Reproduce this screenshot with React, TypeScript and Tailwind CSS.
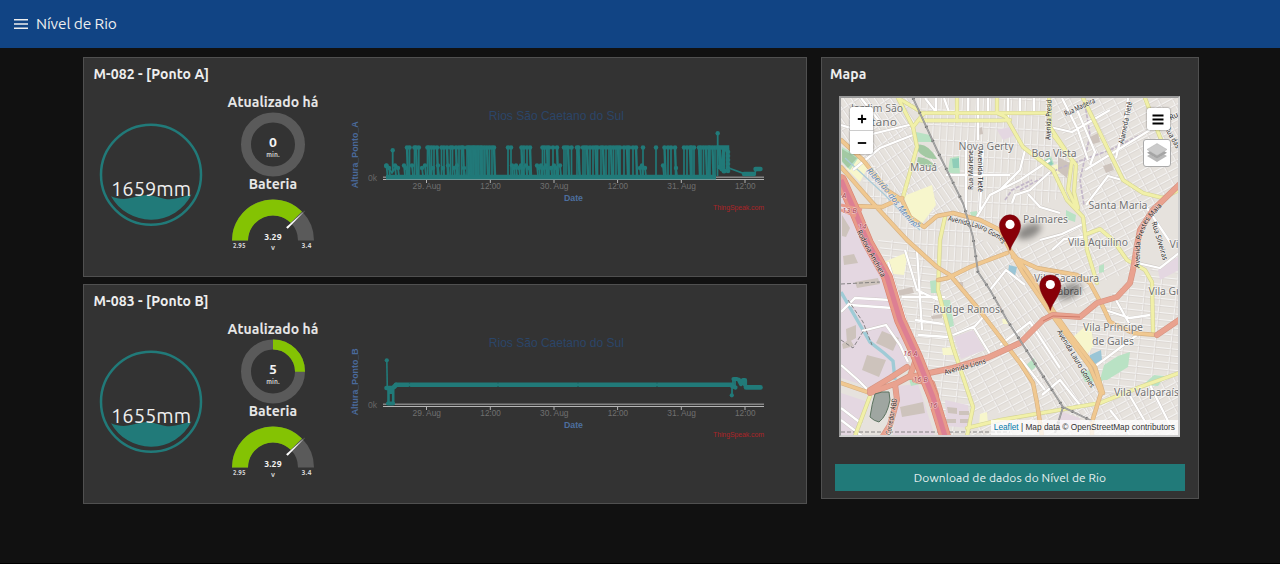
import React from "react";

const TEAL = "#217a79";
const UI = "Ubuntu, 'Noto Sans', 'Open Sans', sans-serif";
const ARIAL = "'Liberation Sans', Arial, sans-serif";

/* ---------- gauges ---------- */

function WaterGauge({ value, cls }: { value: string; cls: string }) {
  return (
    <svg viewBox="93 92 117 184" className={cls}>
      <circle cx="151" cy="174.7" r="50" fill="none" stroke={TEAL} strokeWidth="2.5" />
      <path
        d="M111 196.2 C117 198.5 122 199.6 128 198.6 C135 197.3 140 195.2 147 194.9 C155 195 162 199.3 170 199.3 C178 199 185 196 191.5 194.6 A45.5 45.5 0 0 1 111 196.2Z"
        fill={TEAL}
      />
      <text x="151" y="195.7" textAnchor="middle" fontFamily={UI} fontSize="20.5" fill="#eeeeee" textLength="80" lengthAdjust="spacingAndGlyphs">
        {value}
      </text>
    </svg>
  );
}

function Donut({ value }: { value: number }) {
  const c = 2 * Math.PI * 27;
  return (
    <svg viewBox="222 112 102 65" className="block h-[65px] w-[102px]">
      <circle cx="273" cy="144.5" r="27" fill="none" stroke="#5a5a5a" strokeWidth="10" />
      {value > 0 && (
        <circle cx="273" cy="144.5" r="27" fill="none" stroke="#84c303" strokeWidth="10" strokeDasharray={`${c / 4} ${c}`} transform="rotate(-90 273 144.5)" />
      )}
      <text x="273" y="147" textAnchor="middle" fontFamily={UI} fontWeight="700" fontSize="13" fill="#f4f4f4" textLength="8" lengthAdjust="spacingAndGlyphs">{value}</text>
      <text x="273" y="157.3" textAnchor="middle" fontFamily={UI} fontSize="6.5" fill="#c8c8c8" textLength="13.5" lengthAdjust="spacingAndGlyphs">min.</text>
    </svg>
  );
}

function HalfGauge() {
  return (
    <svg viewBox="222 194 102 66" className="block h-[66px] w-[102px]">
      <path d="M240 240.5 A33 33 0 0 1 306 240.5" fill="none" stroke="#5a5a5a" strokeWidth="16" />
      <path d="M240 240.5 A33 33 0 0 1 296.3 217.2" fill="none" stroke="#84c303" strokeWidth="16" />
      <path d="M286.1 227.2 L287.7 228.8 L305.2 210.6Z" fill="#ffffff" />
      <text x="273" y="239.7" textAnchor="middle" fontFamily={UI} fontWeight="700" fontSize="8.4" fill="#f4f4f4" textLength="17.5" lengthAdjust="spacingAndGlyphs">3.29</text>
      <text x="273" y="250" textAnchor="middle" fontFamily={UI} fontSize="7.4" fill="#d0d0d0">v</text>
      <text x="239.3" y="248" textAnchor="middle" fontFamily={UI} fontSize="6.3" fill="#d8d8d8" textLength="12.5" lengthAdjust="spacingAndGlyphs">2.95</text>
      <text x="306.5" y="248" textAnchor="middle" fontFamily={UI} fontSize="6.3" fill="#d8d8d8" textLength="10" lengthAdjust="spacingAndGlyphs">3.4</text>
    </svg>
  );
}

/* ---------- charts ---------- */

const TOP = 147.5;
const TALL = [
  407, 409.5, 414.5, 416, 418.8, 427.5, 429, 431.5, 434, 437, 441.5, 444, 447, 450.5, 452.5, 456, 459, 461.5, 463, 467, 468.5, 470, 472, 473.5, 475, 477, 478.5,
  480.5, 482, 484.5, 487, 489.5, 492, 494, 508, 511, 521.5, 524, 527, 530, 542.5, 544.5, 547, 549, 553, 557, 564, 566, 568, 571.5, 577, 578.5, 583, 585, 587,
  590, 593, 595.5, 597.5, 601, 603, 606, 609, 611, 613.5, 616, 618, 620, 624, 627, 629, 633, 636, 643, 656, 664.5, 668, 671, 675, 684, 687, 690, 691.5, 694,
  699, 701, 703.5, 706, 708.5, 710, 712.5, 715, 717.5,
];
const MID = [
  386.5, 389, 395, 398, 404, 406, 412, 422, 425, 433, 438, 443, 448, 454, 457, 464, 512, 514, 516, 519, 521, 523, 526, 529, 537, 539, 541, 544, 546, 551, 554,
  556, 560, 640, 642, 645, 663, 676,
];
const LABELS: [number, string][] = [[426.5, "29. Aug"], [490.3, "12:00"], [554, "30. Aug"], [617.6, "12:00"], [681.3, "31. Aug"], [745, "12:00"]];

function SeriesA() {
  return (
    <g stroke={TEAL} fill={TEAL}>
      <path d="M386 177.1 H716" strokeWidth="4.6" />
      {TALL.map((x, i) => (
        <g key={x}>
          <path d={`M${x} ${TOP} L${x + (i % 3 === 0 ? 1 : 0)} 176`} strokeWidth={i % 3 === 0 ? 2.4 : 1.7} />
          <circle cx={x} cy={TOP} r="2.3" stroke="none" />
        </g>
      ))}
      <path d="M467 148 H485 V176 H470Z M577 150 L580 176 M692 148 V176 M709 148 V176" strokeWidth="1.5" fillOpacity="0.75" />
      {MID.map((x, i) => (
        <g key={x}>
          <path d={`M${x} ${i % 2 ? 168 : 165.5} L${x + 1} 176`} strokeWidth="1.8" />
          <circle cx={x} cy={i % 2 ? 168 : 165.5} r="2.2" stroke="none" />
        </g>
      ))}
      <path d="M392.7 150.3 V172 M387 166 L392 173 L397 165" strokeWidth="1.8" fill="none" />
      <circle cx="392.7" cy="150.3" r="2.2" stroke="none" />
      <circle cx="386.3" cy="166" r="2.4" stroke="none" />
      <path d="M717.7 133.3 V168" strokeWidth="1.8" />
      <circle cx="717.7" cy="133.3" r="2.2" stroke="none" />
      <path d="M718 147.5 H727 L727 150" strokeWidth="4.5" fill="none" strokeLinecap="round" />
      <path d="M719 148 L721 168 M723.5 148 V169 M727.5 148 V171" strokeWidth="3.4" fill="none" />
      <g stroke="none">
        {[152, 156, 160, 164, 168, 171].map((y) => <circle key={y} cx="728" cy={y} r="2.3" />)}
        {[168, 170, 172].map((y) => <circle key={y} cx={720 + (y - 168)} cy={y - 1} r="2.5" />)}
      </g>
      <path d="M718 168 L728 171 M730 168.5 L744 173.5 H755 M755 173 L756 169 H761" strokeWidth="1.8" fill="none" />
      <path d="M744 174 H754 M755.5 169 H760.5" strokeWidth="4.4" strokeLinecap="round" />
    </g>
  );
}

function SeriesB() {
  return (
    <g stroke={TEAL} fill={TEAL}>
      <path d="M386.8 133.3 L387.3 161" strokeWidth="1.6" />
      <circle cx="386.8" cy="133.3" r="2.1" stroke="none" />
      <path d="M386.5 161 H392 M394 160 L396 158" strokeWidth="4.6" strokeLinecap="round" />
      <path d="M388.5 161 V176 M393.2 160 V176 M391 161 V167" strokeWidth="2.6" />
      <path d="M388 176.5 H393" strokeWidth="4.2" strokeLinecap="round" />
      <path d="M396 157.7 H732" strokeWidth="4.6" strokeLinecap="round" />
      <path d="M732 157 V168 M733 157 V152 M735 152 V161" strokeWidth="1.8" />
      <circle cx="731.8" cy="168.3" r="2.1" stroke="none" />
      <path d="M733.5 152 H737 M739 153 L741 157 L743 153 L745 153 L745 158 M735.5 160.5 L732 159" strokeWidth="4.2" fill="none" strokeLinecap="round" strokeLinejoin="round" />
      <path d="M746 160.4 H760.5" strokeWidth="4.6" strokeLinecap="round" />
      <g fill="#185655" stroke="none">
        {[409.5, 498, 578, 657].map((x) => <path key={x} d={`M${x - 1} 155.5h2l-1 1.2zM${x - 1} 160h2l-1-1.2z`} />)}
      </g>
    </g>
  );
}

function Chart({ axis, children }: { axis: string; children: React.ReactNode }) {
  return (
    <svg viewBox="340 92 450 184" className="block h-[184px] w-[450px] shrink-0" fontFamily={ARIAL}>
      <text x="556.3" y="120" textAnchor="middle" fontSize="12.4" fill="#2b4568" textLength="135" lengthAdjust="spacingAndGlyphs">Rios São Caetano do Sul</text>
      <text transform="translate(358.3 154.8) rotate(-90)" textAnchor="middle" fontSize="8.8" fontWeight="700" fill="#4a6a9c" textLength="67" lengthAdjust="spacingAndGlyphs">{axis}</text>
      <text x="368" y="181" fontSize="8.6" fill="#666666">0k</text>
      <path d="M383 177.3 H764" stroke="#858585" strokeWidth="1.4" />
      <path d="M383 179.5 H764" stroke="#b5b5b5" strokeWidth="1.2" />
      {LABELS.map(([x, t]) => (
        <g key={x}>
          <path d={`M${x} 179.5 v3.5`} stroke="#b5b5b5" />
          <text x={x + 0.3} y="189.2" textAnchor="middle" fontSize="8.4" fill="#707070" textLength={t.length > 5 ? 28.5 : 20.5} lengthAdjust="spacingAndGlyphs">{t}</text>
        </g>
      ))}
      {children}
      <text x="573.5" y="201.3" textAnchor="middle" fontSize="8.8" fontWeight="700" fill="#4d6f9f" textLength="19">Date</text>
      <text x="764" y="210" textAnchor="end" fontSize="7" fill="#ab2428" textLength="51">ThingSpeak.com</text>
    </svg>
  );
}

function Station({ title, level, minutes, axis, children }: { title: string; level: string; minutes: number; axis: string; children: React.ReactNode }) {
  return (
    <section className="flex h-[220px] w-[724px] flex-col border border-[#505050] bg-[#333333]">
      <h2 className="h-[34px] pl-[9.5px] text-[14px] leading-[33px] font-semibold tracking-[0.08px] text-[#eeeeee]">{title}</h2>
      <div className="flex">
        <WaterGauge value={level} cls="ml-[9px] block h-[184px] w-[117px] shrink-0" />
        <div className="ml-3 flex w-[102px] shrink-0 flex-col text-center text-[14px] font-semibold tracking-[0.08px] whitespace-nowrap text-[#e6e6e6]">
          <div className="h-5 leading-[21px]">Atualizado há</div>
          <Donut value={minutes} />
          <div className="h-[17px] leading-[15px]">Bateria</div>
          <HalfGauge />
        </div>
        <div className="ml-4">
          <Chart axis={axis}>{children}</Chart>
        </div>
      </div>
    </section>
  );
}

/* ---------- map ---------- */

const INDUSTRIAL = [
  "M841 190 L862 222 L887 285 L909 362 L872 388 L841 378Z",
  "M841 393 L868 402 L858 436 L841 436Z",
  "M897 386 L918 384 L935 436 L893 436Z",
  "M997 130 L1014 126 L1018 134 L1003 140Z",
  "M954 337 L973 330 L985 350 L961 359Z",
  "M945 400 L968 405 L970 428 L947 426Z",
  "M1060 411 L1080 418 L1078 428 L1055 430Z",
  "M1158 270 L1179 256 L1179 270 L1160 280Z",
];
const GREEN = [
  "M842 147 L859 157 L850 170 L842 162Z",
  "M916 132 L930 135 L933 142 L916 142Z",
  "M950 158 L959 156 L960 176 L948 172Z",
  "M930 281 L937 280 L937 293 L931 293Z",
  "M942 300 L950 300 L954 326 L947 328Z",
  "M1044 160 L1051 156 L1054 164 L1048 168Z",
  "M1100 380 L1104 365 L1118 356 L1130 352 L1128 367 L1107 380Z",
  "M1080 371 L1096 370 L1103 381 L1085 382Z",
  "M1143 385 L1154 375 L1165 376 L1158 386Z",
  "M1025 366 L1034 358 L1037 366 L1031 371Z",
  "M1099 266 L1104 264 L1104 272 L1099 273Z",
  "M907 372 L913 377 L920 384 L911 386Z",
  "M1066 210 L1076 215 L1075 222 L1066 219Z",
  "M970 212 L977 211 L977 219 L972 220Z",
];
const PALE = [
  "M904 196 L932 185 L936 205 L921 225 L909 214Z",
  "M857 157 L869 165 L860 182 L846 168Z",
  "M884 262 L908 252 L904 275 L885 273Z",
  "M1049 167 L1057 164 L1061 173 L1053 176Z",
  "M942 348 L953 347 L954 355 L943 355Z",
  "M1072 338 L1090 322 L1094 345 L1086 356Z",
  "M980 414 L987 412 L988 425 L979 425Z",
  "M1002 319 L1007 319 L1008 324 L1003 324Z",
];
const BUILDINGS = [
  "M846 329 L856 325 L856 338 L847 343Z", "M842 344 L850 339 L854 346 L843 349Z", "M882 331 L899 338 L893 351 L876 343Z",
  "M867 355 L886 360 L879 377 L862 370Z", "M843 256 L854 254 L858 263 L844 265Z", "M855 282 L878 278 L880 284 L857 288Z",
  "M900 407 L923 402 L925 413 L902 417Z", "M1103 166 L1111 163 L1114 170 L1106 173Z", "M1088 138 L1098 133 L1100 142 L1090 145Z",
  "M977 129 L982 127 L983 134 L978 135Z", "M931 316 L942 314 L942 318 L932 319Z", "M842 215 L850 228 L846 237 L842 236Z",
  "M947 407 L957 408 L957 414 L948 413Z", "M1058 157 L1070 163 L1067 178 L1058 171Z", "M957 282 h6 v5 h-6z", "M896 291 L912 287 L914 293 L898 296Z",
  "M959 411 h10 v4 h-10z M946 419 h10 v4 h-10z M960 419 h9 v4 h-9z",
];
const WHITE_ROADS = [
  "M853 170 L880 148 L913 135", "M841 125 L872 134 L913 124", "M861 98 L880 122", "M944 98 L949 112", "M925 98 L936 112 M936 98 V113",
  "M968 98 V112 M978 98 V140 M988 98 V112 M1008 98 V120 M1020 98 V112 M1034 98 V112", "M966 140 V220", "M983 150 L980 210", "M946 175 H1010",
  "M975 220 L990 195 L1020 180 L1050 160", "M1000 190 L1020 170 L1025 150", "M1012 203 L1015 195 L1030 190 L1050 172", "M1028 194 L1040 207 L1060 213",
  "M1040 240 L1062 234 L1083 224 M1052 250 L1064 239 L1083 237", "M1050 127 L1072 132 L1110 110 M1062 98 L1078 130 L1088 160", "M1075 105 L1095 152 L1090 165",
  "M1085 170 L1150 130", "M1116 158 L1125 120 L1128 98", "M1086 205 L1108 176 L1122 180", "M1145 205 L1172 245", "M1133 262 L1160 268 L1179 253",
  "M841 312 L855 298 L892 300 V308 L850 305", "M862 331 L886 325 L900 345 L908 362", "M841 365 L858 380 L870 392", "M888 262 L917 357",
  "M905 250 L917 290 L938 300 M917 250 L922 330 M902 297 H945", "M953 335 L975 326 L985 315", "M973 326 L990 354", "M990 290 L1006 270 L1025 285",
  "M1000 345 L1030 322 L1060 368 M1020 358 L1045 390", "M1093 368 L1137 335", "M1042 395 L1060 380 L1080 405", "M841 408 L862 424 M841 420 L862 436",
  "M915 320 L943 324 M918 335 L948 337", "M1105 310 L1130 318 L1150 315 M1116 300 L1130 325", "M1110 410 L1130 435 M1130 396 L1150 430 M1150 385 L1170 425",
];
const YELLOW = [
  "M898 98 L913 127 L917 147 L903 197", "M920 113 H1050", "M921 120.5 H1000 L1010 120", "M957 98 V121", "M997 98 V113 L1006 117 L1023 147 L1053 170 L1067 200 L1083 217 L1087 250 L1097 283",
  "M898 98 L918 110", "M1049 98 L1050 127 L1072 160 L1068 190 L1077 209", "M1054 136 L1076 165 L1074 192 L1078 208", "M1083 98 L1100 133 L1123 180 L1143 193 L1163 198 L1179 190",
  "M945 217 L940 240 L938 290 L953 347 L973 407 L967 436", "M967 428 L1000 420 L1100 403 L1140 387 L1179 373", "M1113 240 L1127 260 L1145 270 L1152 282 L1153 333",
  "M1145 98 L1160 137 L1168 155", "M870 396 L855 436", "M1087 234 L1100 229 L1113 240", "M913 127 L924 113",
];
const ORANGE = [
  "M841 140 L863 160 L887 190 L902 200 L910 217 L924 227 L937 216 L953 213 L980 220 L1000 230 L1010 250 L1023 273 L1050 312 L1063 330 L1090 367 L1101 393 L1092 422 V436",
  "M841 167 L870 200 L907 240 L937 267 L950 275 L977 307 L1020 363 L1033 383 L1037 403 L1042 436",
  "M938 280 L948 278 L970 267 L1007 253", "M1013 257 L1037 268 L1077 275 L1090 283 L1103 307 L1110 322 L1133 333 L1157 335", "M841 383 L870 393", "M853 206 L882 207 L902 198",
  "M1010 250 L1026 270 L1054 312 L1068 332 L1095 367 L1103 393",
];
const RED = [
  "M910 377 L953 368 L987 358 L1020 343 L1043 320 L1053 315 L1080 317 L1097 303 L1117 297 L1130 283 L1133 270 L1137 245 L1140 230 L1153 210 L1179 185",
  "M1157 335 L1179 320", "M870 393 L897 383 L910 376 L915 362", "M895 384 L897 400 L890 425 L883 436", "M870 390 L890 378 L907 367", "M915 380 L932 383 L936 395",
];
const ANCHIETA = "M841 180 L853 207 L868 243 L887 277 L900 320 L917 357 L933 397 L945 436";
const RAIL = "M913 98 L937 150 L963 203 L973 237 L978 272 L990 290 L1007 320 L1063 407 L1092 421 M1063 407 L1055 433";

function Roads({ list, edge, fill, w }: { list: string[]; edge: string; fill: string; w: number }) {
  return (
    <g fill="none" strokeLinejoin="round" strokeLinecap="round">
      <path d={list.join(" ")} stroke={edge} strokeWidth={w + 1.2} />
      <path d={list.join(" ")} stroke={fill} strokeWidth={w} />
    </g>
  );
}

const PLACES: [number, number, number, string][] = [
  [851, 112, 52, "Jardim São"], [850, 126, 47, "Caetano"], [958.5, 150, 55, "Nova Gerty"], [910, 171, 27, "Mauá"], [1031.5, 156.5, 45, "Boa Vista"], [1088.5, 208.5, 59, "Santa Maria"],
  [1023, 223, 45, "Palmares"], [1068, 245.5, 60, "Vila Aquilino"], [933, 313, 67, "Rudge Ramos"], [1034, 281.5, 65, "Vila Sacadura"], [1051, 295, 31, "Cabral"],
  [1083, 331, 60, "Vila Príncipe"], [1092, 344.5, 42, "de Gales"], [1148.5, 294.5, 34, "Vila Gu"], [1114, 396, 65, "Vila Valparaís"], [1169.5, 248, 9, "Vi"],
];
const STREETS: [string, number, string][] = [
  ["M971.5 190 V147", 40, "Rua Marlene"], ["M979.5 150 V195", 42, "Avenida Tietê"], ["M948 219 L980 227 L1001 239 L1008 252", 62, "Avenida Lauro Gomes"],
  ["M858 231 L884 279", 52, "Rodovia Anchieta"], ["M944.5 373.5 L987 361.5", 43, "Avenida Lions"], ["M1058 331 L1077 362 L1093 389", 66, "Avenida Lauro Gomes"],
  ["M1138 268 L1139 240 L1146 222 L1160 206", 70, "Avenida Prestes Maia"], ["M1153 222 L1165 262", 40, "Rua Silveiras"], ["M1065 115 L1097 100", 33, "Rua Madeira"],
  ["M1122 144 L1131 101", 43, "Alameda Tietê"], ["M1049 140 L1050 99", 40, "Avenida Presid"], ["M889 435 L896 398", 37, "Corredor ABD"], ["M1166 128 L1178 149", 23, "Rua das"], ["M1170 119 L1178 115", 9, "Ru"],
];

function Pin({ x, y }: { x: number; y: number }) {
  return (
    <g transform={`translate(${x} ${y})`}>
      <ellipse cx="19" cy="-19" rx="13" ry="6.5" transform="rotate(-25 19 -19)" fill="#000" opacity="0.4" filter="url(#shade)" />
      <path d="M0 0 C-2-8 -10.6-16 -10.6-25 A10.6 10.6 0 0 1 10.6-25 C10.6-16 2-8 0 0Z" fill="#880008" stroke="#700008" strokeWidth="0.5" />
      <circle cx="0" cy="-26" r="4.6" fill="#fff" />
    </g>
  );
}

function MapDrawing() {
  return (
    <svg viewBox="841 98 337 337" className="block h-full w-full">
      <defs>
        <filter id="shade" x="-50%" y="-50%" width="200%" height="200%"><feGaussianBlur stdDeviation="3" /></filter>
        <pattern id="g1" width="13" height="7" patternUnits="userSpaceOnUse" patternTransform="rotate(-28)"><path d="M0 0H13M0 0V7" stroke="#fff" strokeWidth="1.8" /><path d="M0 1.1H13M1.1 0V7" stroke="#c5bfbb" strokeWidth=".45" /></pattern>
        <pattern id="g2" width="7" height="15" patternUnits="userSpaceOnUse" patternTransform="rotate(3)"><path d="M0 0H7M0 0V15" stroke="#fff" strokeWidth="1.8" /><path d="M1.1 0V15M0 1.1H7" stroke="#c5bfbb" strokeWidth=".45" /></pattern>
        <pattern id="g3" width="6.5" height="17" patternUnits="userSpaceOnUse" patternTransform="rotate(-34)"><path d="M0 0H6.5M0 0V17" stroke="#fff" strokeWidth="1.8" /><path d="M1.1 0V17M0 1.1H7" stroke="#c5bfbb" strokeWidth=".45" /></pattern>
        <pattern id="g4" width="16" height="7" patternUnits="userSpaceOnUse" patternTransform="rotate(6)"><path d="M0 0H16M0 0V7" stroke="#fff" strokeWidth="1.8" /><path d="M0 1.1H16M1.1 0V7" stroke="#c5bfbb" strokeWidth=".45" /></pattern>
      </defs>
      <rect x="841" y="98" width="338" height="338" fill="#e6e2dd" />
      <path d="M841 98 H913 L917 150 L903 197 L841 140Z" fill="url(#g3)" />
      <path d="M913 98 H1050 V127 L1072 160 L1066 195 L1020 215 L973 237 L937 150Z" fill="url(#g2)" />
      <path d="M937 150 L917 160 L903 197 L936 215 L973 220Z" fill="url(#g3)" />
      <path d="M1050 98 H1179 V185 L1140 230 L1137 270 L1097 283 L1083 217 L1072 160Z" fill="url(#g1)" />
      <path d="M973 237 L1010 250 L1050 312 L1020 343 L978 272Z M1007 320 L1043 322 L1100 393 L1092 421 L1063 407Z" fill="url(#g3)" />
      <path d="M870 160 L903 197 L936 215 L975 220 L975 275 L940 270 L907 240 L860 190Z" fill="url(#g2)" />
      <path d="M878 240 L907 240 L938 275 L953 347 L917 357 L887 277Z" fill="url(#g4)" />
      <path d="M917 357 L953 347 L973 407 L967 436 H945 L933 397Z" fill="url(#g4)" />
      <path d="M940 275 L978 272 L1007 320 L1063 407 L973 415 L953 347Z" fill="url(#g1)" />
      <path d="M1010 250 L1087 225 L1097 303 L1050 312Z" fill="url(#g1)" />
      <path d="M1097 303 L1133 280 L1179 255 V373 L1101 400 L1063 330Z" fill="url(#g4)" />
      <path d="M967 430 L1179 376 V436 H967Z" fill="url(#g1)" />
      <path d={INDUSTRIAL.join(" ")} fill="#e4d7e1" />
      <path d={PALE.join(" ")} fill="#f7f6cc" />
      <path d={GREEN.join(" ")} fill="#b9e2c4" />
      <path d="M917 145 Q927 142 937 159 Q925 160 917 150Z M918 157 Q928 157 936 167 Q922 168 917 162Z M842 149 L857 158 L848 168 L842 161Z" fill="#a3c9a3" />
      <path d="M952 159 L959 158 L959 168 L953 168Z M1044 161 L1050 158 L1053 164 L1048 167Z" fill="#8fcdb8" />
      <path d={BUILDINGS.join(" ")} fill="#cdc3bc" />
      <path d="M1009 265 L1017 267 L1015 276 L1008 273Z M1090 355 L1101 350 L1102 360 L1088 368Z" fill="#9ac5d6" />
      <path d="M841 292 L856 318 L870 342 L884 353 L893 361 L895 380" fill="none" stroke="#9fcbd6" strokeWidth="3.4" />
      <path d="M845 158 L885 195 L904 215 L920 230" fill="none" stroke="#abcbd8" strokeWidth="1.2" />
      <path d="M1084 98 L1090 135 L1080 180 L1084 205 M1020 190 L1060 168 L1110 150 L1150 130 M1005 200 L1012 190 L1032 180" fill="none" stroke="#c3b7c9" strokeWidth="1.7" strokeDasharray="4 1.5" />
      <path d={WHITE_ROADS.join(" ")} fill="none" stroke="#c9c4c0" strokeWidth="3" />
      <path d={WHITE_ROADS.join(" ")} fill="none" stroke="#ffffff" strokeWidth="2.3" />
      <path d="M841 284 L880 282 M841 340 L853 348 L864 330 M848 300 L863 322 L872 345 M841 432 H1010" fill="none" stroke="#6d6d6d" strokeWidth="0.8" strokeDasharray="4 2" />
      <Roads list={YELLOW} edge="#d4d394" fill="#f1f0a8" w={3} />
      <Roads list={ORANGE} edge="#d6b183" fill="#f0c890" w={3.2} />
      <Roads list={RED} edge="#d49482" fill="#e9a28f" w={4.8} />
      <Roads list={[ANCHIETA]} edge="#d9826f" fill="#e89a8a" w={10.5} />
      <path d={ANCHIETA} fill="none" stroke="#dd7f93" strokeWidth="5" />
      <path d="M841 205 L862 210 M841 210 L856 216" stroke="#e89a8a" strokeWidth="3" />
      <path d="M875 394 Q882 391 889 392 L890 400 Q887 416 879 422 Q874 421 870 417 Q872 403 875 394Z" fill="#9fa6a1" stroke="#5c7360" strokeWidth="1" />
      <path d="M1043 321 L1053 316 L1080 317" fill="none" stroke="#c86f5e" strokeWidth="0.8" />
      <path d={RAIL} fill="none" stroke="#8f8f8f" strokeWidth="1.8" />
      <path d={RAIL} fill="none" stroke="#707070" strokeWidth="3" strokeDasharray="1.5 14" />
      <path d={RAIL} fill="none" stroke="#b9b9b9" strokeWidth="0.6" />
      <g fontFamily="'Noto Sans', sans-serif" fontSize="7.4" fill="#2a2a2a" stroke="#fff" strokeWidth="1.2" strokeOpacity="0.5" paintOrder="stroke">
        {STREETS.map(([d, len, t], i) => (
          <g key={d}>
            <path id={`street-${i}`} d={d} fill="none" stroke="none" />
            <text dy="1.5"><textPath href={`#street-${i}`} textLength={len} lengthAdjust="spacingAndGlyphs">{t}</textPath></text>
          </g>
        ))}
        <path id="river" d="M866 171 L886 193 L902 214 L912 226 L928 229" fill="none" stroke="none" />
        <text fontSize="8.5" fontStyle="italic" fill="#6489b5"><textPath href="#river" textLength="80" lengthAdjust="spacingAndGlyphs">Ribeirão dos Meninos</textPath></text>
      </g>
      <g fontFamily="'Noto Sans', sans-serif" fontSize="7.5" fontStyle="italic" fill="#a8434e" stroke="#fff" strokeWidth="1" strokeOpacity="0.6" paintOrder="stroke">
        <text x="903" y="356">16 A</text><text x="913" y="382">16 B</text><text x="929" y="408">16</text><text x="858" y="229">14</text><text x="842" y="213">13 B</text><text x="842" y="198">A</text>
      </g>
      <g fontFamily="'Noto Sans', sans-serif" fontSize="10.6" fill="#747474" stroke="#fff" strokeWidth="1.6" strokeOpacity="0.6" paintOrder="stroke">
        {PLACES.map(([x, y, len, t]) => <text key={t} x={x} y={y} textLength={len} lengthAdjust="spacingAndGlyphs">{t}</text>)}
      </g>
      <Pin x={1010} y={250.4} />
      <Pin x={1050.3} y={310.5} />
    </svg>
  );
}

function MapPanel() {
  return (
    <div className="relative h-[341px] w-[341px] border-2 border-t-[#999999] border-r-[#cfcfcf] border-b-[#cfcfcf] border-l-[#999999] bg-white">
      <MapDrawing />
      <div className="absolute top-[9px] left-[9px] flex w-[23px] flex-col rounded-[2px] bg-white shadow-[0_0_2px_rgba(0,0,0,0.6)]">
        <span className="flex h-6 items-center justify-center border-b border-[#cccccc]">
          <svg viewBox="0 0 10 10" className="h-[10px] w-[10px]"><path d="M5 .8V9.2M.8 5H9.2" stroke="#000" strokeWidth="1.8" /></svg>
        </span>
        <span className="flex h-[23px] items-center justify-center">
          <svg viewBox="0 0 10 10" className="h-[10px] w-[10px]"><path d="M.8 5H9.2" stroke="#000" strokeWidth="1.8" /></svg>
        </span>
      </div>
      <div className="absolute top-[10px] right-[8.5px] flex h-[22px] w-[23px] items-center justify-center rounded-[2px] bg-white shadow-[0_0_2px_rgba(0,0,0,0.6)]">
        <svg viewBox="0 0 12 11" className="h-[11px] w-3"><path d="M.5 1.5H11.5M.5 5.5H11.5M.5 9.5H11.5" stroke="#000" strokeWidth="1.9" /></svg>
      </div>
      <div className="absolute top-[41px] right-[7.5px] flex h-7 w-7 items-center justify-center rounded-[3px] border border-[#aaaaaa] bg-white">
        <svg viewBox="0 0 20 20" className="h-5 w-5">
          <path d="M0 13 L10 19 L20 13 L17 11.2 L10 15.5 L3 11.2Z" fill="#b9b9b9" />
          <path d="M0 9.8 L10 15.8 L20 9.8 L17 8 L10 12.2 L3 8Z" fill="#a5a5a5" />
          <path d="M0 6.5 L10 .5 L20 6.5 L10 12.5Z" fill="#cbcbcb" stroke="#b0b0b0" strokeWidth=".5" />
        </svg>
      </div>
      <div className="absolute right-0 bottom-0 h-[15px] bg-white/75 pr-[3px] pl-[3px] font-['Liberation_Sans',Arial,sans-serif] text-[8.3px] leading-[14px] whitespace-nowrap text-[#333333]">
        <span className="text-[#0078a8]">Leaflet</span> | Map data © OpenStreetMap contributors
      </div>
    </div>
  );
}

export default function App() {
  return (
    <div className="flex h-[564px] w-[1280px] flex-col overflow-hidden border-b border-black bg-[#111111] font-[Ubuntu,'Noto_Sans','Open_Sans',sans-serif]">
      <header className="flex h-12 shrink-0 items-center bg-[#114484] pl-[14px] text-[#eeeeee]">
        <svg viewBox="0 0 14 10" className="h-[10px] w-[14px]"><path d="M0 .8H14M0 5H14M0 9.2H14" stroke="#eee" strokeWidth="1.5" /></svg>
        <h1 className="ml-2 text-[15.5px] tracking-[-0.12px]">Nível de Rio</h1>
      </header>
      <main className="flex pt-[9px] pl-[83px]">
        <div className="flex flex-col gap-[7px]">
          <Station title="M-082 - [Ponto A]" level="1659mm" minutes={0} axis="Altura_Ponto_A"><SeriesA /></Station>
          <Station title="M-083 - [Ponto B]" level="1655mm" minutes={5} axis="Altura_Ponto_B"><SeriesB /></Station>
        </div>
        <section className="ml-[14px] flex h-[442px] w-[378px] flex-col border border-[#505050] bg-[#333333]">
          <h2 className="h-[38px] pl-[8px] text-[14px] leading-[33px] font-semibold tracking-[0.08px] text-[#eeeeee]">Mapa</h2>
          <div className="ml-[17px]"><MapPanel /></div>
          <button className="mt-[27px] ml-[13px] h-[27px] w-[350px] bg-[#217a79] text-[12px] leading-[27px] tracking-[0.08px] text-[#e8f0f0]">Download de dados do Nível de Rio</button>
        </section>
      </main>
    </div>
  );
}
